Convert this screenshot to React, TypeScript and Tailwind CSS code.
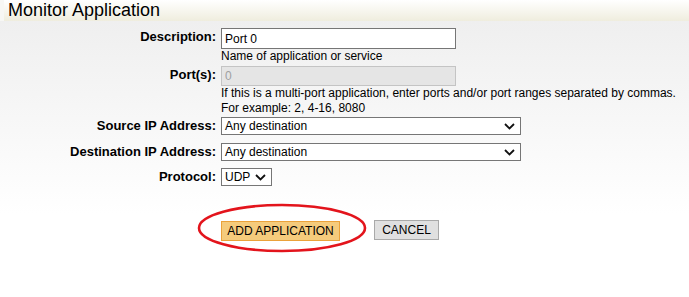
import React from "react";

const font = { fontFamily: '"Liberation Sans", Arial, sans-serif' };

function Chevron() {
  return (
    <svg width="11" height="7" viewBox="0 0 11 7" className="shrink-0">
      <path d="M1 1 L5.5 5.5 L10 1" fill="none" stroke="#111" strokeWidth="1.8" />
    </svg>
  );
}

function Select({ value, width }: { value: string; width: string }) {
  return (
    <div
      className={`flex h-[18px] ${width} items-center justify-between border border-[#767676] bg-white pl-[3px] pr-[5px] text-[12px] text-black`}
    >
      <span>{value}</span>
      <Chevron />
    </div>
  );
}

function Row({
  label,
  children,
  className = "",
}: {
  label: string;
  children: React.ReactNode;
  className?: string;
}) {
  return (
    <div className={`flex items-start ${className}`}>
      <div className="w-[221px] shrink-0 pr-[5px] pt-[1px] text-right text-[13px] font-bold leading-[16px] text-black">
        {label}
      </div>
      <div className="flex flex-col">{children}</div>
    </div>
  );
}

export default function App() {
  return (
    <div className="h-[297px] w-[689px] overflow-hidden bg-white" style={font}>
      <div className="flex h-[21px] bg-gradient-to-b from-white to-[#efedde]">
        <div className="w-[4px] bg-[#f7f7f4]" />
        <h1 className="pl-[4px] text-[18px] leading-[21px] text-black">Monitor Application</h1>
      </div>
      <div className="h-[276px] bg-gradient-to-b from-[#efefef] to-white to-[70%] pt-[7px]">
        <Row label="Description:">
          <input
            readOnly
            value="Port 0"
            className="h-[21px] w-[235px] border border-[#767676] bg-white px-[3px] text-[12px] text-black outline-none"
          />
          <span className="mt-[1px] text-[12px] leading-[13px] text-black">Name of application or service</span>
        </Row>
        <Row label="Port(s):" className="mt-[3px]">
          <input
            disabled
            value="0"
            className="h-[20px] w-[235px] border border-[#c4c4c4] bg-[#e5e5e5] px-[3px] text-[12px] text-[#a0a0a0] outline-none"
          />
          <span className="text-[12px] leading-[15px] text-black">
            If this is a multi-port application, enter ports and/or port ranges separated by commas.
          </span>
          <span className="text-[12px] leading-[15px] text-black">For example: 2, 4-16, 8080</span>
        </Row>
        <Row label="Source IP Address:" className="mt-[1px]">
          <Select value="Any destination" width="w-[300px]" />
        </Row>
        <Row label="Destination IP Address:" className="mt-[8px]">
          <Select value="Any destination" width="w-[300px]" />
        </Row>
        <Row label="Protocol:" className="mt-[7px]">
          <Select value="UDP" width="w-[51px]" />
        </Row>
        <div className="mt-[32px] flex items-center pl-[221px]">
          <div className="relative">
            <svg
              width="170"
              height="50"
              viewBox="0 0 170 50"
              className="absolute left-[-24px] top-[-15px]"
            >
              <ellipse cx="85" cy="25" rx="83" ry="23" fill="none" stroke="#e3141c" strokeWidth="2.6" />
            </svg>
            <button className="relative h-[20px] w-[119px] border border-[#eba23a] bg-[#f5cb7c] text-[12px] text-black">
              ADD APPLICATION
            </button>
          </div>
          <button className="ml-[34px] h-[20px] w-[65px] border border-[#a9a9a9] bg-[#e0e0e0] text-[12px] text-black">
            CANCEL
          </button>
        </div>
      </div>
    </div>
  );
}
